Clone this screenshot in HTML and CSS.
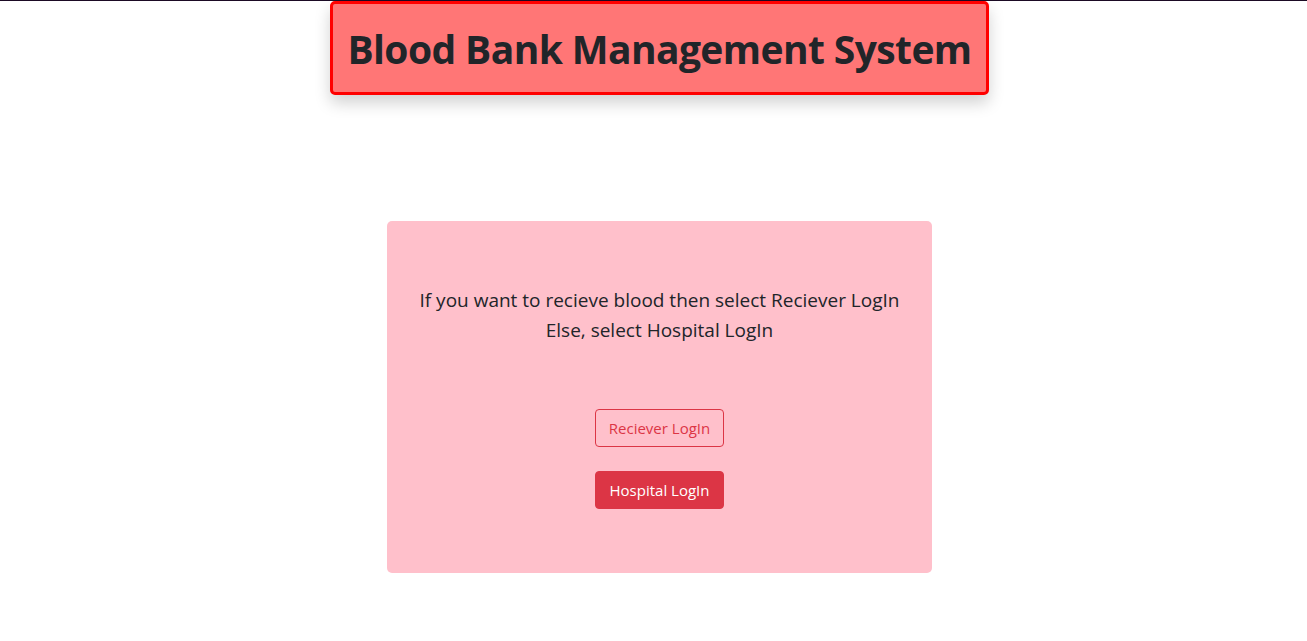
FILE: index.html
```html
<!DOCTYPE html>
<html>
<head>
<meta charset="utf-8">
<link rel="stylesheet" href="styles.css">
</head>
<body>
<div class="topline"></div>
<div class="page">
  <header class="head-wrap">
    <h1 class="title">Blood Bank Management System</h1>
  </header>
  <main class="main">
    <section class="card">
      <p class="msg">If you want to recieve blood then select Reciever LogIn<br>Else, select Hospital LogIn</p>
      <div class="actions">
        <button class="btn btn-outline">Reciever LogIn</button>
        <button class="btn btn-solid">Hospital LogIn</button>
      </div>
    </section>
  </main>
</div>
</body>
</html>
```
FILE: styles.css
```css
html, body {
  margin: 0;
  padding: 0;
  background: #fff;
  font-family: "Open Sans", "Noto Sans", sans-serif;
  color: #212529;
}
.topline {
  height: 1px;
  background: #1b0a24;
}
.page {
  padding-left: 12px;
}
.head-wrap {
  display: flex;
  justify-content: center;
}
.title {
  margin: 0;
  box-sizing: border-box;
  width: 659px;
  height: 94px;
  display: flex;
  align-items: center;
  justify-content: center;
  background: #ff7676;
  border: 3px solid #ff0000;
  border-radius: 5px;
  box-shadow: 0 8px 16px rgba(0,0,0,0.18);
  font-size: 39px;
  font-weight: 700;
  color: #212529;
  letter-spacing: -0.6px;
}
.main {
  display: flex;
  justify-content: center;
  padding-top: 126px;
}
.card {
  box-sizing: border-box;
  width: 545px;
  height: 352px;
  background: #ffc0cb;
  border-radius: 5px;
  display: flex;
  flex-direction: column;
  align-items: center;
  padding-top: 64px;
}
.msg {
  margin: 0;
  text-align: center;
  font-size: 19px;
  line-height: 30px;
  color: #212529;
}
.actions {
  margin-top: 64px;
  display: flex;
  flex-direction: column;
  align-items: center;
  gap: 24px;
}
.btn {
  box-sizing: border-box;
  width: 129px;
  height: 38px;
  font-family: inherit;
  font-size: 15px;
  border-radius: 4px;
  padding: 0;
  cursor: pointer;
}
.btn-outline {
  background: transparent;
  border: 1px solid #dc3545;
  color: #dc3545;
}
.btn-solid {
  background: #dc3545;
  border: 1px solid #dc3545;
  color: #fff;
}
```
